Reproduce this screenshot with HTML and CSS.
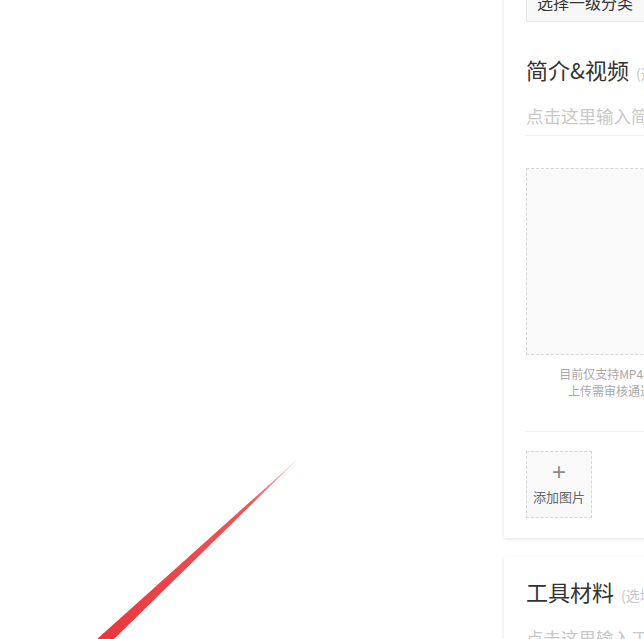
FILE: index.html
```html
<!DOCTYPE html>
<html lang="zh-CN">
<head>
    <meta charset="UTF-8">
    <meta name="viewport" content="width=device-width, initial-scale=1.0">
    <title>发布作品</title>
    <link rel="stylesheet" href="styles.css">
</head>
<body>
    <div class="page">
        <div class="stage">
            <svg class="stroke" width="504" height="639" viewBox="0 0 504 639">
                <defs>
                    <linearGradient id="fade" x1="300" y1="457" x2="105" y2="639" gradientUnits="userSpaceOnUse">
                        <stop offset="0" stop-color="#e8383d" stop-opacity="0.15"/>
                        <stop offset="0.25" stop-color="#e8383d" stop-opacity="0.85"/>
                        <stop offset="1" stop-color="#e8383d"/>
                    </linearGradient>
                </defs>
                <polygon points="300,457 113,640 96,640" fill="url(#fade)"/>
            </svg>
        </div>
        <div class="side">
            <div class="card">
                <div class="select">选择一级分类</div>
                <h2 class="section-title">简介&amp;视频<span class="hint">(选填)</span></h2>
                <div class="input-line">点击这里输入简介，让大家更好地了解你的作品</div>
                <div class="video-upload">
                    <div class="video-box"></div>
                    <p class="caption">目前仅支持MP4格式，大小不超过200M<br>上传需审核通过后才会展示给其他人</p>
                </div>
                <div class="pics">
                    <div class="add-pic">
                        <span class="plus">+</span>
                        <span class="add-label">添加图片</span>
                    </div>
                </div>
            </div>
            <div class="card">
                <h2 class="section-title first">工具材料<span class="hint">(选填)</span></h2>
                <div class="input-line">点击这里输入工具材料，每行一项</div>
            </div>
        </div>
    </div>
</body>
</html>
```

FILE: styles.css
```css
body {
    margin: 0;
    background: #fff;
    font-family: "Noto Sans CJK SC", "Noto Sans", sans-serif;
    color: #333;
    overflow: hidden;
}
.page {
    display: flex;
    height: 639px;
    overflow: hidden;
}
.stage {
    width: 504px;
    flex-shrink: 0;
    position: relative;
}
.stroke {
    position: absolute;
    left: 0;
    top: 0;
}
.side {
    width: 720px;
    flex-shrink: 0;
    margin-top: -18px;
}
.card {
    background: #fff;
    padding: 0 22px 20px;
    box-shadow: 0 1px 4px rgba(0, 0, 0, 0.12);
    margin-bottom: 19px;
}
.select {
    height: 38px;
    line-height: 38px;
    border: 1px solid #e6e6e6;
    background: #f8f8f8;
    padding-left: 10px;
    font-size: 16px;
    color: #333;
}
.section-title {
    margin: 32px 0 0;
    font-size: 22px;
    line-height: 30px;
    font-weight: normal;
    color: #333;
}
.section-title.first {
    margin-top: 0;
    padding-top: 19px;
}
.hint {
    font-size: 14px;
    color: #c8c8c8;
    margin-left: 7px;
}
.input-line {
    margin-top: 16px;
    font-size: 17.5px;
    line-height: 24px;
    color: #c8c8c8;
    padding-bottom: 7px;
    border-bottom: 1px solid #eee;
    white-space: nowrap;
    overflow: hidden;
}
.video-upload {
    width: 276px;
    padding: 32px 0 32px;
}
.video-box {
    height: 185px;
    border: 1px dashed #d6d6d6;
    background: #f9f9f9;
}
.caption {
    margin: 10px 0 0;
    font-size: 12px;
    line-height: 17px;
    color: #a8a8a8;
    text-align: center;
    white-space: nowrap;
}
.pics {
    border-top: 1px solid #eee;
    padding-top: 19px;
}
.add-pic {
    width: 64px;
    height: 65px;
    border: 1px dashed #d6d6d6;
    background: #f9f9f9;
    display: flex;
    flex-direction: column;
    align-items: center;
}
.plus {
    margin-top: 7px;
    font-size: 24px;
    line-height: 26px;
    color: #8a8a8a;
    font-family: "Liberation Sans", sans-serif;
}
.add-label {
    margin-top: 3px;
    font-size: 13px;
    line-height: 18px;
    color: #666;
}
```
